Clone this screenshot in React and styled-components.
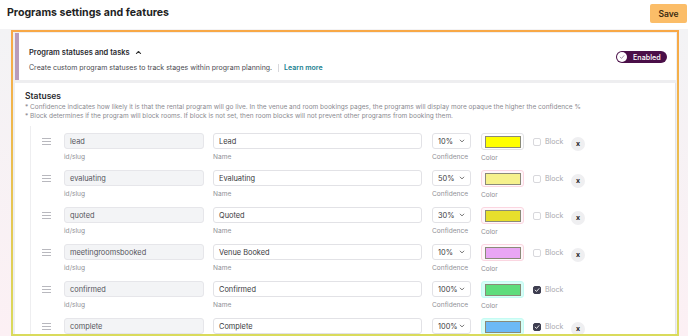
import styled, { createGlobalStyle } from "styled-components";

const GlobalStyle = createGlobalStyle`
  html, body {
    margin: 0;
    padding: 0;
    background: #ffffff;
    font-family: Inter, "Noto Sans", sans-serif;
    color: #222;
  }
  * { box-sizing: border-box; }
`;

const Page = styled.div`
  width: 688px;
  height: 336px;
  overflow: hidden;
  display: flex;
  flex-direction: column;
`;

const TopBar = styled.div`
  flex: none;
  display: flex;
  align-items: flex-start;
  justify-content: space-between;
  height: 29px;
  padding: 4px 1px 0 7px;
  background: #fff;
`;

const Title = styled.h1`
  margin: 0;
  padding-top: 2px;
  font-size: 10.6px;
  font-weight: 700;
  line-height: 14px;
  color: #1f1f24;
`;

const SaveButton = styled.button`
  width: 37px;
  height: 19px;
  border: none;
  border-radius: 2px;
  background: #fbbd68;
  color: #3a2a10;
  font-family: inherit;
  font-size: 8.5px;
  font-weight: 600;
  padding: 0;
`;

const Main = styled.div`
  flex: 1;
  min-height: 0;
  padding: 1px 9px 0 11px;
  background: linear-gradient(to bottom, #f3f3f5, #fcf0f4);
  display: flex;
  flex-direction: column;
`;

const Frame = styled.div`
  flex: 1;
  min-height: 0;
  border: 2px solid;
  border-image: linear-gradient(to bottom, #f8a846, #d9db5c) 1;
  padding: 1px 1px 0 2px;
  display: flex;
  flex-direction: column;
  background: #eeeef0;
  overflow: hidden;
`;

const HeaderCard = styled.div`
  flex: none;
  display: flex;
  align-items: center;
  justify-content: space-between;
  height: 47px;
  background: #fff;
  border-left: 4px solid #b89cba;
  padding: 0 9px 0 10px;
`;

const HeaderText = styled.div`
  display: flex;
  flex-direction: column;
  gap: 6px;
  padding-top: 7px;
`;

const HeaderTitle = styled.div`
  display: flex;
  align-items: center;
  gap: 5px;
  font-size: 7.5px;
  font-weight: 600;
  color: #2a2a2e;
`;

const Description = styled.div`
  font-size: 7px;
  color: #4a4a50;
  display: flex;
  align-items: center;
`;

const Divider = styled.span`
  display: inline-block;
  width: 1px;
  height: 8px;
  background: #d8d8dc;
  margin: 0 5px 0 6px;
`;

const LearnMore = styled.a`
  color: #17808f;
  font-weight: 600;
  text-decoration: none;
`;

const Toggle = styled.div`
  display: flex;
  align-items: center;
  gap: 6px;
  width: 51px;
  height: 12px;
  border-radius: 6px;
  background: #4a0f48;
  padding: 0 1px;
  margin-top: 1px;
  color: #fff;
  font-size: 7.2px;
  font-weight: 500;
`;

const Knob = styled.span`
  width: 10px;
  height: 10px;
  border-radius: 50%;
  background: #fff;
  display: flex;
  align-items: center;
  justify-content: center;
`;

const StatusCard = styled.div`
  flex: 1;
  min-height: 0;
  margin-top: 3px;
  background: #fff;
  border-right: 1px solid #e4e4e8;
  padding: 8px 10px 0 10px;
`;

const SectionTitle = styled.div`
  font-size: 8.5px;
  font-weight: 600;
  color: #2a2a2e;
  margin-bottom: 2px;
`;

const Note = styled.div`
  font-size: 6.5px;
  line-height: 9px;
  color: #8a8a90;
  white-space: nowrap;
`;

const Rows = styled.div`
  margin: 5px 0 0 5px;
  border-left: 1px solid #eeeef0;
  padding: 7px 0 0 11px;
  display: flex;
  flex-direction: column;
  gap: 5px;
`;

const Row = styled.div`
  display: flex;
  align-items: flex-start;
  height: 32px;
`;

const Handle = styled.div`
  width: 9px;
  margin-top: 5px;
  margin-right: 13px;
  display: flex;
  flex-direction: column;
  gap: 2px;
  span {
    height: 1px;
    background: #b8b8be;
  }
`;

const Field = styled.div`
  display: flex;
  flex-direction: column;
  width: ${(p) => p.$w}px;
  margin-right: ${(p) => p.$gap ?? 9}px;
`;

const Input = styled.div`
  height: 16px;
  border-radius: 3px;
  border: 1px solid ${(p) => (p.$readonly ? "#e6e6ea" : "#e2e2e6")};
  background: ${(p) => (p.$readonly ? "#f3f4f6" : "#fff")};
  font-size: 7.4px;
  color: ${(p) => (p.$readonly ? "#55555c" : "#3a3a40")};
  display: flex;
  align-items: center;
  padding: 0 5px;
  justify-content: space-between;
`;

const Label = styled.div`
  font-size: 6.6px;
  color: #909096;
  margin-top: 4px;
  white-space: nowrap;
`;

const ColorBox = styled.div`
  height: 17px;
  border-radius: 3px;
  border: 1px solid ${(p) => p.$ring};
  background: ${(p) => p.$glow};
  display: flex;
  align-items: center;
  justify-content: center;
`;

const Swatch = styled.div`
  width: 36px;
  height: 12px;
  border: 1px solid #8a8a78;
  background: ${(p) => p.$color};
`;

const BlockField = styled.label`
  display: flex;
  align-items: center;
  gap: 4px;
  width: 38px;
  margin-top: 4px;
  font-size: 7px;
  color: #a8a8ae;
`;

const Check = styled.span`
  width: 8px;
  height: 8px;
  border-radius: 2px;
  border: 1px solid ${(p) => (p.$on ? "#3e3e50" : "#d8d8dc")};
  background: ${(p) => (p.$on ? "#3e3e50" : "#fff")};
  display: flex;
  align-items: center;
  justify-content: center;
`;

const RemoveButton = styled.button`
  width: 14px;
  height: 14px;
  margin-top: 4px;
  border-radius: 50%;
  border: none;
  padding: 0;
  background: #efeff1;
  color: #222;
  font-family: inherit;
  font-size: 7px;
  font-weight: 700;
  line-height: 14px;
`;

const PINK = { ring: "#fbd6e1", glow: "#fff7fa" };
const CYAN = { ring: "#c5fbf3", glow: "#d6fff8" };

const statuses = [
  { slug: "lead", name: "Lead", conf: "10%", color: "#ffff00", ring: "#e2e2e6", glow: "#fff", block: false, remove: true },
  { slug: "evaluating", name: "Evaluating", conf: "50%", color: "#f6f18c", ...PINK, block: false, remove: true },
  { slug: "quoted", name: "Quoted", conf: "30%", color: "#e7df2c", ...PINK, block: false, remove: true },
  { slug: "meetingroomsbooked", name: "Venue Booked", conf: "10%", color: "#e9a6f4", ...PINK, block: false, remove: true },
  { slug: "confirmed", name: "Confirmed", conf: "100%", color: "#5ddd7c", ...CYAN, block: true, remove: false },
  { slug: "complete", name: "Complete", conf: "100%", color: "#6cb9f6", ...CYAN, block: true, remove: true },
];

const Chevron = ({ size = 6, color = "#555" }) => (
  <svg width={size} height={size} viewBox="0 0 10 10" fill="none">
    <path d="M2 3.5 L5 6.5 L8 3.5" stroke={color} strokeWidth="1.4" strokeLinecap="round" strokeLinejoin="round" />
  </svg>
);

const CheckMark = ({ color = "#fff", size = 6 }) => (
  <svg width={size} height={size} viewBox="0 0 10 10" fill="none">
    <path d="M2 5.2 L4.2 7.4 L8.2 2.8" stroke={color} strokeWidth="1.5" strokeLinecap="round" strokeLinejoin="round" />
  </svg>
);

const StatusRow = ({ s }) => (
  <Row>
    <Handle>
      <span />
      <span />
      <span />
    </Handle>
    <Field $w={140}>
      <Input $readonly>{s.slug}</Input>
      <Label>id/slug</Label>
    </Field>
    <Field $w={209} $gap={10}>
      <Input>{s.name}</Input>
      <Label>Name</Label>
    </Field>
    <Field $w={39} $gap={10}>
      <Input>
        {s.conf}
        <Chevron />
      </Input>
      <Label>Confidence</Label>
    </Field>
    <Field $w={43} $gap={9}>
      <ColorBox $ring={s.ring} $glow={s.glow}>
        <Swatch $color={s.color} />
      </ColorBox>
      <Label>Color</Label>
    </Field>
    <BlockField>
      <Check $on={s.block}>{s.block && <CheckMark />}</Check>
      Block
    </BlockField>
    {s.remove && <RemoveButton>x</RemoveButton>}
  </Row>
);

export default function App() {
  return (
    <Page>
      <GlobalStyle />
      <TopBar>
        <Title>Programs settings and features</Title>
        <SaveButton>Save</SaveButton>
      </TopBar>
      <Main>
        <Frame>
          <HeaderCard>
            <HeaderText>
              <HeaderTitle>
                Program statuses and tasks
                <svg width="7" height="7" viewBox="0 0 10 10" fill="none">
                  <path d="M2 6.5 L5 3.5 L8 6.5" stroke="#333" strokeWidth="1.5" strokeLinecap="round" strokeLinejoin="round" />
                </svg>
              </HeaderTitle>
              <Description>
                Create custom program statuses to track stages within program planning.
                <Divider />
                <LearnMore href="#">Learn more</LearnMore>
              </Description>
            </HeaderText>
            <Toggle>
              <Knob>
                <CheckMark color="#9a8aa0" size={6} />
              </Knob>
              Enabled
            </Toggle>
          </HeaderCard>
          <StatusCard>
            <SectionTitle>Statuses</SectionTitle>
            <Note>
              * Confidence indicates how likely it is that the rental program will go live. In the venue and room bookings pages, the programs will display more opaque the higher the confidence %
            </Note>
            <Note>
              * Block determines if the program will block rooms. If block is not set, then room blocks will not prevent other programs from booking them.
            </Note>
            <Rows>
              {statuses.map((s) => (
                <StatusRow key={s.slug} s={s} />
              ))}
            </Rows>
          </StatusCard>
        </Frame>
      </Main>
    </Page>
  );
}
